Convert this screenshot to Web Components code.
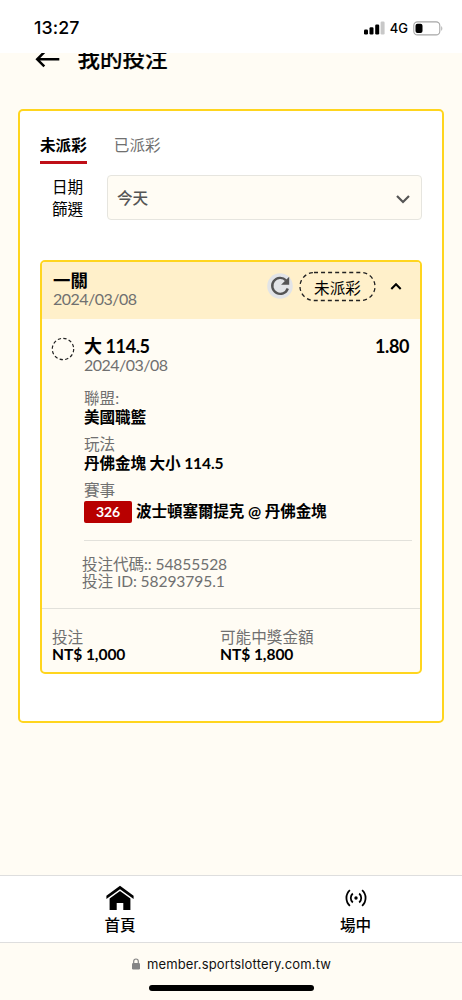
<!DOCTYPE html>
<html lang="zh-Hant">
<head>
<meta charset="utf-8">
<title>我的投注</title>
<style>
html,body{margin:0;height:100%}
body{background:#fffcf4;font-family:Lato,"Noto Sans CJK TC",sans-serif;font-size:15.6px;color:#000;overflow:hidden}
</style>
</head>
<body>
<bet-app></bet-app>
<script>
const define = (name, css, html) => customElements.define(name, class extends HTMLElement {
  constructor() {
    super();
    const t = document.createElement('template');
    t.innerHTML = `<style>*{box-sizing:border-box}${css}</style>${html}`;
    this.attachShadow({mode: 'open'}).append(t.content.cloneNode(true));
  }
});

define('status-bar', `
:host{display:flex;height:53px;background:#fff;align-items:center;justify-content:space-between;padding:3px 19px 0 34px;box-sizing:border-box;font-family:Inter,sans-serif;flex:none;position:relative;z-index:1}
.time{font-size:17.8px;font-weight:500;letter-spacing:.1px;line-height:20px}
.right{display:flex;align-items:center;gap:5px;font-size:13px;font-weight:500;line-height:16px}
svg{display:block}`, `
<span class="time">13:27</span>
<div class="right">
<svg width="22" height="14" viewBox="0 0 22 14"><rect x="1" y="8.5" width="4" height="5" rx="1.2"/><rect x="6.5" y="6.3" width="4" height="7.2" rx="1.2"/><rect x="12.2" y="3.6" width="4" height="9.9" rx="1.2"/><rect x="17.6" y=".6" width="4" height="12.9" rx="1.2" fill="#c8c8c8"/></svg>
<span>4G</span>
<svg width="30" height="15" viewBox="0 0 30 15"><rect x=".8" y=".9" width="26" height="13" rx="3.7" fill="none" stroke="#a6a6a6" stroke-width="1.1"/><rect x="2.5" y="2.7" width="7" height="9.4" rx="2"/><path d="M28.3 5.2c1.3.5 1.3 4 0 4.5z" fill="#a6a6a6"/></svg>
</div>`);

define('page-title', `
:host{display:flex;height:56px;flex:none;box-sizing:border-box;padding-left:35px;align-items:flex-start}
svg{margin-top:-2px;display:block}
span{font-size:22.5px;font-weight:500;-webkit-text-stroke:.2px #000;line-height:32px;margin:-10px 0 0 17.5px}`, `
<svg width="25" height="17" viewBox="0 0 25 17" fill="none" stroke="#000" stroke-width="2.5"><path d="M24.3 8.3H2.5M9.3 1.2L2.2 8.3l7.1 7.1"/></svg><span><slot></slot></span>`);

define('bet-tab', `
:host{display:block;height:29px;line-height:21px;color:#707070;box-sizing:border-box}
:host([active]){color:#000;font-weight:700;border-bottom:3px solid #bf0f17}`, `<slot></slot>`);

define('date-filter', `
:host{display:flex;align-items:flex-start;margin-top:11px}
.label{width:67px;line-height:22px;padding:1px 20px 0 12px}
.select{flex:1;height:45px;border:1px solid #e6e5df;border-radius:4px;background:#fffcf4;display:flex;align-items:center;justify-content:space-between;padding:0 10px 2px 9px;font-weight:500;color:#555}`, `
<div class="label">日期篩選</div>
<div class="select"><slot></slot><svg width="16" height="10" viewBox="0 0 16 10" style="position:relative;top:2px" fill="none" stroke="#555" stroke-width="2.2"><path d="M2 2l6 6 6-6"/></svg></div>`);

define('labelled-value', `
:host{display:block}
.k{height:18px;line-height:18px;color:#707070;white-space:nowrap}
.v{height:19px;line-height:19px;margin-top:var(--value-shift,0);font-weight:700;white-space:nowrap;display:flex;align-items:center;letter-spacing:var(--value-spacing,0)}`, `
<div class="k"><slot name="label"></slot></div><div class="v"><slot></slot></div>`);

define('event-number', `
:host{display:flex;align-items:center;justify-content:center;width:48px;height:22px;background:#b80000;color:#fff;border-radius:2px;font-size:14px;font-weight:700;letter-spacing:-.2px;margin-right:4px;flex:none}`, `<slot></slot>`);

define('ticket-header', `
:host{display:flex;height:57px;background:#fff0ca;padding:0 18px 0 11px;align-items:flex-start;box-sizing:border-box}
.name{flex:1;padding-top:10px}
b{display:block;font-size:17.4px;height:18px;line-height:18px}
.date{color:#707070;height:18px;line-height:18px;font-size:16px;letter-spacing:-.52px}
svg{display:block;flex:none}
.refresh{margin-top:11px}
.pill{margin:9px 0 0 5px;width:77px;height:31px;display:grid;place-items:center;position:relative}
.pill svg{position:absolute;inset:0}
.caret{margin:20px 0 0 14px}`, `
<div class="name"><b><slot></slot></b><div class="date"><slot name="date"></slot></div></div>
<svg class="refresh" width="27" height="27" viewBox="0 0 27 27"><circle cx="13" cy="13" r="12.8" fill="#e2e4e7"/><path d="M19 7.3A8 8 0 1 0 20.8 15.5" fill="none" stroke="#555" stroke-width="2.4"/><path d="M22.2 3.7v8.1h-8.1z" fill="#555"/></svg>
<div class="pill"><svg width="77" height="31" viewBox="0 0 77 31"><rect x="1" y="1.5" width="75" height="28" rx="14" fill="none" stroke="#222" stroke-width="1.3" stroke-dasharray="4 3.05"/></svg><slot name="state"></slot></div>
<svg class="caret" width="12" height="10" viewBox="0 0 12 10" fill="none" stroke="#000" stroke-width="2"><path d="M1.3 7L6 2.2 10.7 7"/></svg>`);

define('bet-leg', `
:host{display:flex;padding:17px 8px 0 9px;height:222px;box-sizing:border-box}
.ring{display:block;margin-top:1px;flex:none}
.main{flex:1;margin-left:9px;border-bottom:1px solid #e2e1db}
.top{display:flex;justify-content:space-between;font-size:18px;font-weight:700;line-height:20px;height:20px;padding-right:3px;letter-spacing:-.4px}
.date{color:#707070;line-height:18px;height:18px;margin-bottom:15px;font-size:16px;letter-spacing:-.52px}
.list{display:grid;gap:8px;--value-shift:1px}`, `
<svg class="ring" width="24" height="24" viewBox="0 0 24 24"><circle cx="12" cy="12" r="10.7" fill="none" stroke="#222" stroke-width="1.2" stroke-dasharray="3.3 2.3"/></svg>
<div class="main"><div class="top"><span><slot name="pick"></slot></span><span><slot name="odds"></slot></span></div>
<div class="date"><slot name="date"></slot></div><div class="list"><slot></slot></div></div>`);

define('bet-codes', `
:host{display:block;height:68px;padding:15px 0 0 40px;box-sizing:border-box;line-height:17px;color:#707070;border-bottom:1px solid #e2e1db;letter-spacing:-.1px}
::slotted(div){height:17px}`, `<slot></slot>`);

define('bet-ticket', `
:host{display:block;margin-top:40px;height:414px;border:2px solid #ffd51e;border-radius:5px;background:#fffcf4;overflow:hidden;box-sizing:border-box}
.leg{--value-spacing:-.12px;--value-shift:1px}
.match{--value-shift:3px}
.sum{display:grid;grid-template-columns:168px 1fr;padding:19px 0 0 10px;--value-spacing:-.08px;--value-shift:-1px}`, `
<ticket-header>一關<span slot="date">2024/03/08</span><span slot="state">未派彩</span></ticket-header>
<bet-leg class="leg"><span slot="pick">大 114.5</span><span slot="odds">1.80</span><span slot="date">2024/03/08</span>
<labelled-value><span slot="label">聯盟:</span>美國職籃</labelled-value>
<labelled-value><span slot="label">玩法</span>丹佛金塊 大小 114.5</labelled-value>
<labelled-value class="match"><span slot="label">賽事</span><event-number>326</event-number><span>波士頓塞爾提克 @ 丹佛金塊</span></labelled-value>
</bet-leg>
<bet-codes><div>投注代碼:: 54855528</div><div>投注 ID: 58293795.1</div></bet-codes>
<div class="sum"><labelled-value><span slot="label">投注</span>NT$ 1,000</labelled-value><labelled-value><span slot="label">可能中獎金額</span>NT$ 1,800</labelled-value></div>`);

define('bet-panel', `
:host{display:block;margin:0 18px;height:614px;border:2px solid #ffd51e;border-radius:5px;background:#fff;padding:24px 20px 0;box-sizing:border-box;flex:none}
nav{display:flex;gap:27px}`, `
<nav><bet-tab active>未派彩</bet-tab><bet-tab>已派彩</bet-tab></nav>
<date-filter>今天</date-filter><bet-ticket></bet-ticket>`);

define('nav-item', `
:host{display:flex;flex-direction:column;align-items:center;font-weight:500;line-height:22px}
.icon{height:26px;display:grid;place-items:center;margin-bottom:3px}`, `<div class="icon"><slot name="icon"></slot></div><slot></slot>`);

define('bottom-nav', `
:host{display:grid;grid-template-columns:240px 231px;margin-top:auto;height:68px;background:#fff;border-top:1px solid #dedede;border-bottom:1px solid #dedede;padding-top:9px;box-sizing:border-box;flex:none}
svg{display:block}`, `
<nav-item><svg slot="icon" width="28" height="26" viewBox="0 0 28 26"><path d="M.4 14V10.700L14 .8l13.600 9.900V14L14 4.200z"/><path d="M3.600 13.500L14 6l10.400 7.500V25H17.300v-7h-6.600v7H3.600z"/></svg>首頁</nav-item>
<nav-item><svg slot="icon" width="22" height="18" viewBox="0 0 22 18" fill="none" stroke="#000" stroke-width="1.8"><circle cx="11" cy="9" r="1.7" fill="#000" stroke="none"/><path d="M7.800 4.500a6 6 0 0 0 0 9M14.200 4.500a6 6 0 0 1 0 9M4.900 1.200a10.500 10.500 0 0 0 0 15.600M17.100 1.200a10.500 10.500 0 0 1 0 15.600"/></svg>場中</nav-item>`);

define('url-bar', `
:host{display:flex;flex-direction:column;align-items:center;height:57px;flex:none;font-family:Inter,sans-serif;font-size:13px;color:#111}
.row{display:flex;gap:7px;align-items:center;height:18px;margin:12px 0 0 1px;letter-spacing:.15px}
.home{width:165px;height:6px;border-radius:3px;background:#000;margin-top:12px}`, `
<div class="row"><svg width="8" height="12" viewBox="0 0 8 12"><rect y="5" width="8" height="6.500" rx="1.200" fill="#858585"/><path d="M1.700 5.500V3.300a2.300 2.300 0 0 1 4.600 0v2.200" fill="none" stroke="#858585" stroke-width="1.200"/></svg><span><slot></slot></span></div><div class="home"></div>`);

define('bet-app', `:host{display:flex;flex-direction:column;height:100vh}`, `
<status-bar></status-bar><page-title>我的投注</page-title><bet-panel></bet-panel><bottom-nav></bottom-nav><url-bar>member.sportslottery.com.tw</url-bar>`);
</script>
</body>
</html>
